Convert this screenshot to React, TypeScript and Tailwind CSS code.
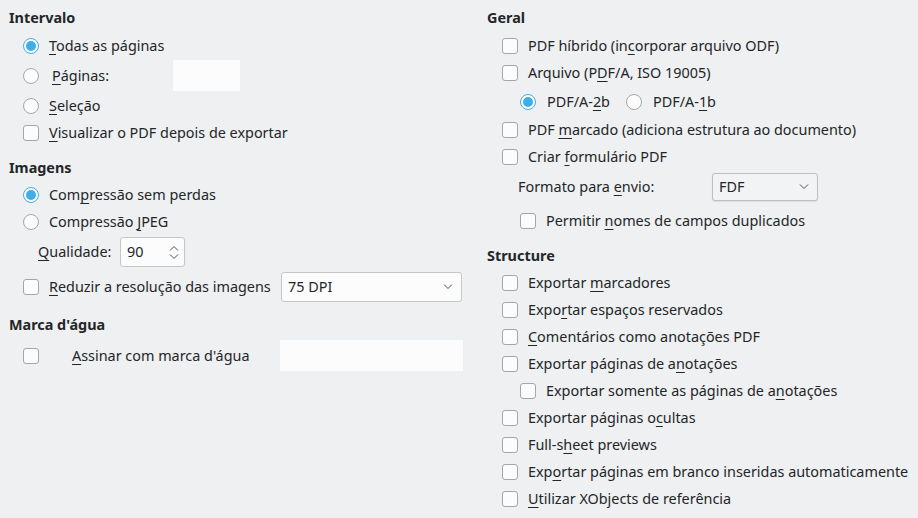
import type { ReactNode } from "react";

const font = { fontFamily: '"Noto Sans", sans-serif' };

function Radio({ checked }: { checked?: boolean }) {
  return checked ? (
    <span className="flex h-4 w-4 shrink-0 items-center justify-center rounded-full border border-[#3daee9] bg-white">
      <span className="h-[10px] w-[10px] rounded-full bg-[#3daee9]" />
    </span>
  ) : (
    <span className="h-4 w-4 shrink-0 rounded-full border border-[#a4a6a8] bg-[#fcfcfc]" />
  );
}

function Check() {
  return <span className="h-4 w-4 shrink-0 rounded-[3px] border border-[#a4a6a8] bg-[#fcfcfc]" />;
}

function U({ children }: { children: ReactNode }) {
  return <span className="underline decoration-1 underline-offset-[3px]">{children}</span>;
}

function Heading({ children, className = "" }: { children: ReactNode; className?: string }) {
  return <div className={`flex h-6 items-center font-bold ${className}`}>{children}</div>;
}

function Row({
  children,
  className = "",
  box = "check",
}: {
  children: ReactNode;
  className?: string;
  box?: "check" | "radio" | "radioOn";
}) {
  return (
    <div className={`flex h-6 items-center gap-[10px] ${className}`}>
      {box === "check" ? <Check /> : <Radio checked={box === "radioOn"} />}
      <span>{children}</span>
    </div>
  );
}

function Chevron({ up }: { up?: boolean }) {
  return (
    <svg width="10" height="6" viewBox="0 0 10 6" fill="none" stroke="#4d4f51" strokeWidth="1">
      {up ? <path d="M1 5.5 L5 1.5 L9 5.5" /> : <path d="M1 0.5 L5 4.5 L9 0.5" />}
    </svg>
  );
}

export default function App() {
  return (
    <div
      className="flex h-[518px] w-[918px] bg-[#eff0f1] pt-px text-[14.4px] text-[#232629]"
      style={font}
    >
      {/* Left column */}
      <div className="flex w-[478px] flex-col pl-[9px]">
        <Heading className="mt-[5px]">Intervalo</Heading>
        <Row box="radioOn" className="mt-[4px] pl-[14px]">
          <U>T</U>odas as páginas
        </Row>
        <div className="mt-[2px] flex h-[31px] items-center pl-[14px]">
          <Radio />
          <span className="ml-[13px] w-[121px]">
            <U>P</U>áginas:
          </span>
          <div className="h-[31px] w-[67px] bg-[#fcfcfc]" />
        </div>
        <Row box="radio" className="mt-[3px] pl-[14px]">
          <U>S</U>eleção
        </Row>
        <Row className="mt-[3px] pl-[14px]">
          <U>V</U>isualizar o PDF depois de exportar
        </Row>

        <Heading className="mt-[11px]">Imagens</Heading>
        <Row box="radioOn" className="mt-[3px] pl-[14px]">
          Com<U>p</U>ressão sem perdas
        </Row>
        <Row box="radio" className="mt-[3px] pl-[14px]">
          Compressão <U>J</U>PEG
        </Row>
        <div className="mt-[3px] flex h-[30px] items-center pl-[29px]">
          <span className="w-[82px]">
            <U>Q</U>ualidade:
          </span>
          <div className="flex h-[30px] w-[65px] items-center justify-between rounded-[3px] border border-[#c4c6c8] bg-[#fcfcfc] pl-[6px] pr-[5px]">
            <span>90</span>
            <span className="flex flex-col gap-[3px]">
              <Chevron up />
              <Chevron />
            </span>
          </div>
        </div>
        <div className="mt-[5px] flex h-[30px] items-center pl-[14px]">
          <Check />
          <span className="ml-[10px] w-[232px]">
            <U>R</U>eduzir a resolução das imagens
          </span>
          <div className="flex h-[30px] w-[181px] items-center justify-between rounded-[3px] border border-[#c4c6c8] bg-[#fcfcfc] pl-[6px] pr-[8px]">
            <span>75 DPI</span>
            <Chevron />
          </div>
        </div>

        <Heading className="mt-[11px]">Marca d'água</Heading>
        <div className="mt-[3px] flex h-[31px] items-center pl-[14px]">
          <Check />
          <span className="ml-[33px] w-[208px]">
            <U>A</U>ssinar com marca d'água
          </span>
          <div className="h-[31px] w-[183px] bg-[#fcfcfc]" />
        </div>
      </div>

      {/* Right column */}
      <div className="flex flex-1 flex-col pl-[9px]">
        <Heading className="mt-[5px]">Geral</Heading>
        <Row className="mt-[4px] pl-[15px]">
          PDF híbrido (in<U>c</U>orporar arquivo ODF)
        </Row>
        <Row className="mt-[3px] pl-[15px]">
          Arquivo (P<U>D</U>F/A, ISO 19005)
        </Row>
        <div className="mt-[5px] flex h-6 items-center pl-[33px]">
          <Radio checked />
          <span className="ml-[11px] w-[79px]">
            PDF/A-<U>2</U>b
          </span>
          <Radio />
          <span className="ml-[11px]">
            PDF/A-<U>1</U>b
          </span>
        </div>
        <Row className="mt-[4px] pl-[15px]">
          PDF <U>m</U>arcado (adiciona estrutura ao documento)
        </Row>
        <Row className="mt-[3px] pl-[15px]">
          Criar <U>f</U>ormulário PDF
        </Row>
        <div className="mt-[4px] flex h-[28px] items-center pl-[31px]">
          <span className="w-[194px]">
            Formato para <U>e</U>nvio:
          </span>
          <div className="flex h-[28px] w-[106px] items-center justify-between rounded-[3px] border border-[#bcbebf] bg-[#f2f3f4] pl-[6px] pr-[8px] shadow-[0_1px_1px_rgba(0,0,0,0.08)]">
            <span>FDF</span>
            <Chevron />
          </div>
        </div>
        <Row className="mt-[8px] pl-[33px]">
          Permitir <U>n</U>omes de campos duplicados
        </Row>

        <Heading className="mt-[11px]">Structure</Heading>
        <Row className="mt-[3px] pl-[15px]">
          Exportar <U>m</U>arcadores
        </Row>
        <Row className="mt-[3px] pl-[15px]">
          Expo<U>r</U>tar espaços reservados
        </Row>
        <Row className="mt-[3px] pl-[15px]">
          <U>C</U>omentários como anotações PDF
        </Row>
        <Row className="mt-[3px] pl-[15px]">
          Exportar páginas de a<U>n</U>otações
        </Row>
        <Row className="mt-[3px] pl-[33px]">
          Exportar somente as páginas de a<U>n</U>otações
        </Row>
        <Row className="mt-[3px] pl-[15px]">
          Exportar páginas o<U>c</U>ultas
        </Row>
        <Row className="mt-[3px] pl-[15px]">
          Full-s<U>h</U>eet previews
        </Row>
        <Row className="mt-[3px] pl-[15px]">
          Exp<U>o</U>rtar páginas em branco inseridas automaticamente
        </Row>
        <Row className="mt-[3px] pl-[15px]">
          <U>U</U>tilizar XObjects de referência
        </Row>
      </div>
    </div>
  );
}
